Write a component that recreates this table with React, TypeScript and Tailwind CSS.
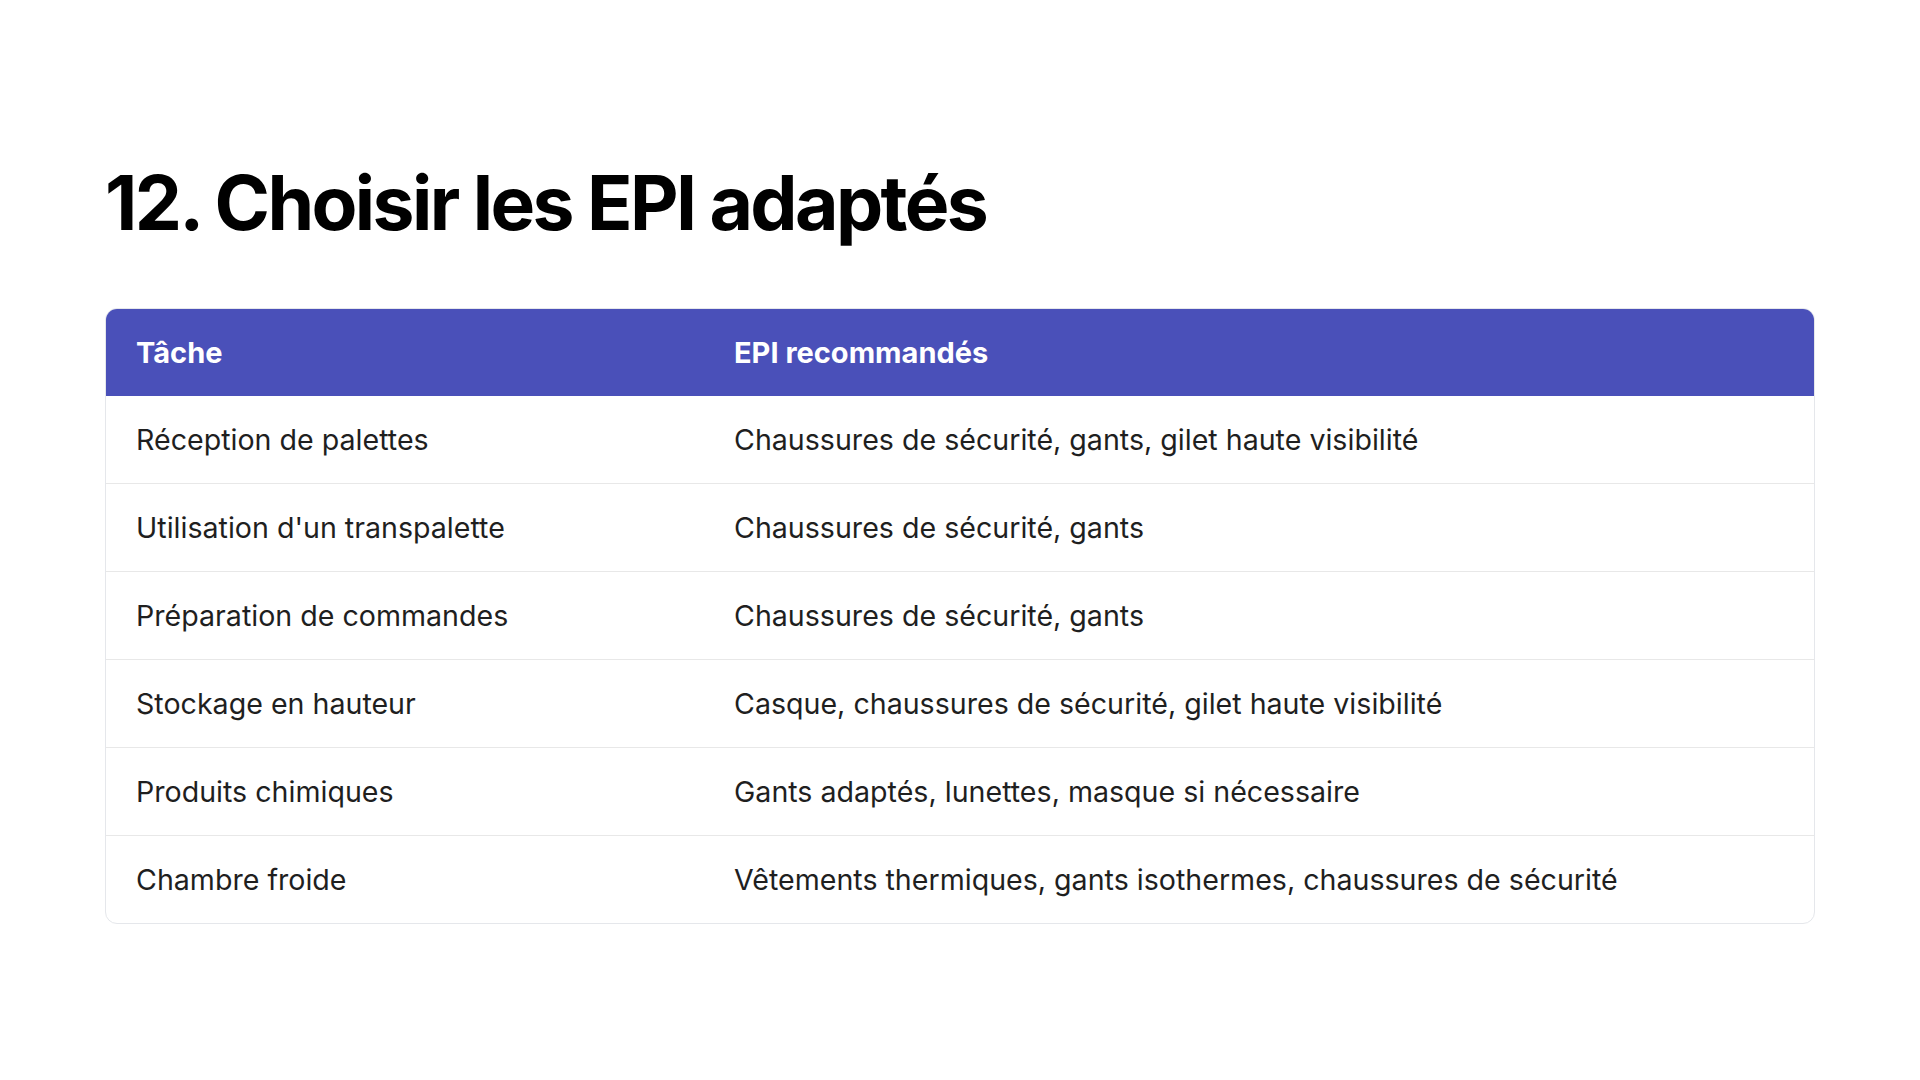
import React from "react";

const rows: [string, string][] = [
  ["Réception de palettes", "Chaussures de sécurité, gants, gilet haute visibilité"],
  ["Utilisation d'un transpalette", "Chaussures de sécurité, gants"],
  ["Préparation de commandes", "Chaussures de sécurité, gants"],
  ["Stockage en hauteur", "Casque, chaussures de sécurité, gilet haute visibilité"],
  ["Produits chimiques", "Gants adaptés, lunettes, masque si nécessaire"],
  ["Chambre froide", "Vêtements thermiques, gants isothermes, chaussures de sécurité"],
];

export default function App() {
  return (
    <div
      className="w-[1920px] h-[1080px] bg-white px-[105px] pt-[157px]"
      style={{ fontFamily: "Inter, 'Noto Sans', sans-serif" }}
    >
      <h1 className="text-[75px] font-bold leading-[92px] tracking-[-0.035em] text-black">
        12. Choisir les EPI adaptés
      </h1>
      <div className="mt-[59px] rounded-xl border border-[#e5e7eb] overflow-hidden">
        <div className="grid grid-cols-[598px_1fr] h-[87px] bg-[#4a50b9] text-white text-[29px] font-bold items-center">
          <div className="pl-[30px]">Tâche</div>
          <div className="pl-[30px]">EPI recommandés</div>
        </div>
        {rows.map(([a, b], i) => (
          <div
            key={i}
            className={`grid grid-cols-[598px_1fr] items-center pt-[1px] text-[28.6px] text-[#1f1f1f] ${
              i < rows.length - 1 ? "h-[88px] border-b border-[#e8e8e8]" : "h-[87px]"
            }`}
          >
            <div className="pl-[30px]">{a}</div>
            <div className="pl-[30px]">{b}</div>
          </div>
        ))}
      </div>
    </div>
  );
}
